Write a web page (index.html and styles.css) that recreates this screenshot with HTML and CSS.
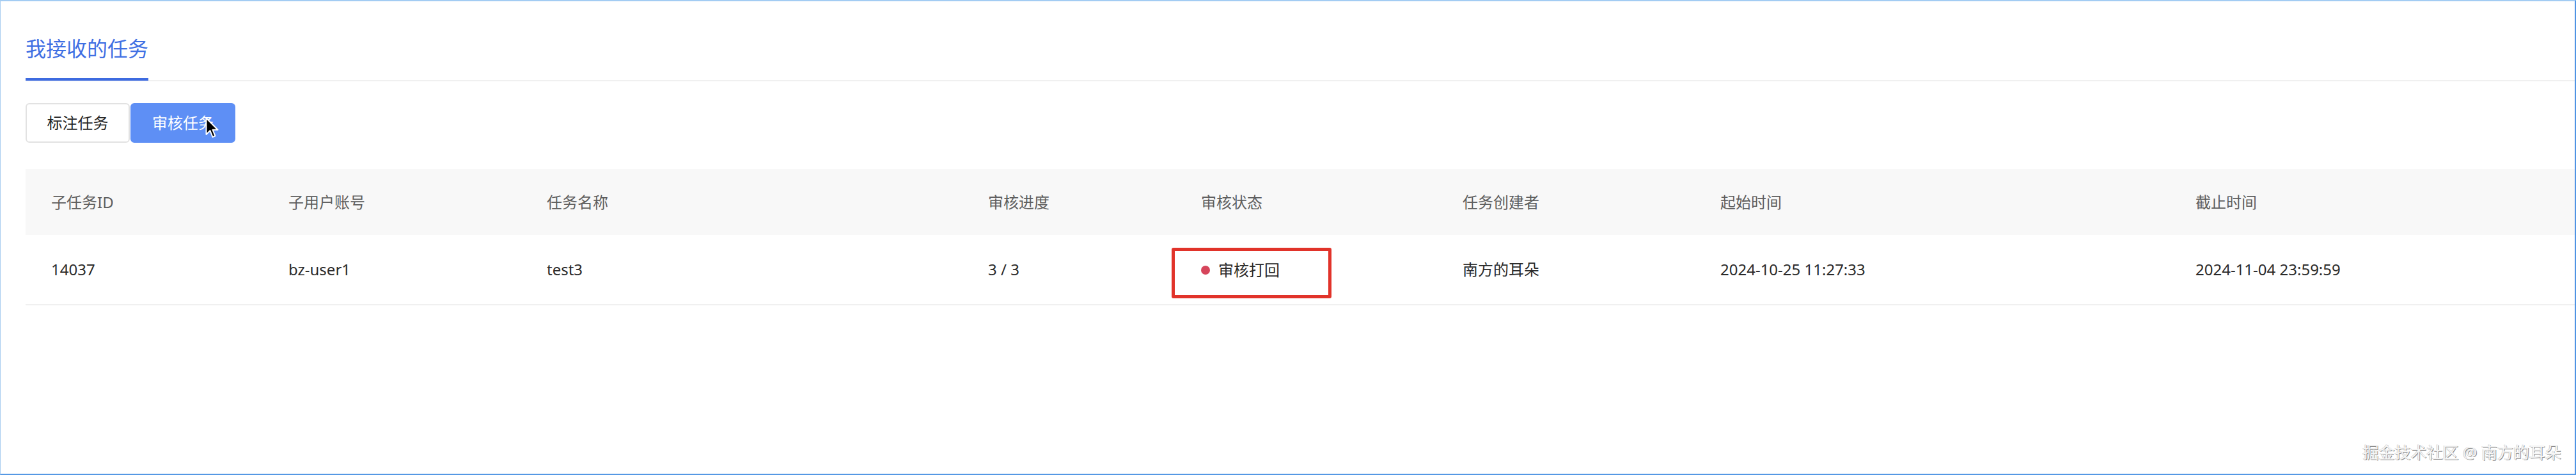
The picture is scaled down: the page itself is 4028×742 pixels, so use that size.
FILE: index.html
```html
<!DOCTYPE html>
<html lang="zh-CN">
<head>
<meta charset="utf-8">
<title>我接收的任务</title>
<link rel="stylesheet" href="styles.css">
</head>
<body>
<div class="frame">
  <div class="tabbar">
    <div class="tab active">我接收的任务</div>
  </div>
  <div class="switch">
    <button class="seg">标注任务</button>
    <button class="seg on">审核任务</button>
    <svg class="cursor" width="22" height="34" viewBox="0 0 22 34">
      <path d="M1.5 1.5 L1.5 27 L7.5 21 L11.5 31 L15.5 29.3 L11.6 19.8 L19.5 19.8 Z" fill="#000" stroke="#fff" stroke-width="2" stroke-linejoin="round"/>
    </svg>
  </div>
  <table class="grid">
    <colgroup>
      <col class="c1"><col class="c2"><col class="c3"><col class="c4"><col class="c5"><col class="c6"><col class="c7"><col class="c8">
    </colgroup>
    <thead>
      <tr>
        <th>子任务ID</th>
        <th>子用户账号</th>
        <th>任务名称</th>
        <th>审核进度</th>
        <th>审核状态</th>
        <th>任务创建者</th>
        <th>起始时间</th>
        <th>截止时间</th>
      </tr>
    </thead>
    <tbody>
      <tr>
        <td>14037</td>
        <td>bz-user1</td>
        <td>test3</td>
        <td>3 / 3</td>
        <td class="status-cell"><span class="status"><span class="dot"></span>审核打回</span><span class="mark"></span></td>
        <td>南方的耳朵</td>
        <td>2024-10-25 11:27:33</td>
        <td>2024-11-04 23:59:59</td>
      </tr>
    </tbody>
  </table>
  <div class="watermark">掘金技术社区 @ 南方的耳朵</div>
</div>
</body>
</html>
```
FILE: styles.css
```css
* { box-sizing: border-box; }
html, body { margin: 0; padding: 0; background: #fff; }
body {
  font-family: "Noto Sans", "Noto Sans CJK SC", sans-serif;
  color: #262626;
}
.frame {
  position: relative;
  width: 4028px;
  height: 742px;
  border-top: 2px solid #a3ccf3;
  border-left: 1px solid #a8cdf0;
  border-right: 2px solid #4f93e3;
  border-bottom: 2px solid #5598e4;
  padding-left: 39px;
  overflow: hidden;
}
.tabbar {
  display: flex;
  padding-top: 58px;
  border-bottom: 2px solid #f0f0f0;
}
.tab {
  font-size: 32px;
  line-height: 32px;
  padding-bottom: 30px;
  color: #3f6fe3;
  border-bottom: 4px solid #3e6be0;
  margin-bottom: -1px;
}
.switch {
  position: relative;
  display: flex;
  gap: 1px;
  margin-top: 34px;
  height: 62px;
}
.seg {
  font-family: inherit;
  font-size: 24px;
  line-height: 24px;
  height: 62px;
  width: 163px;
  padding: 0;
  border: 2px solid #e2e2e2;
  border-radius: 6px;
  background: #fff;
  color: #262626;
}
.seg.on {
  width: 164px;
  background: #5e8ff5;
  border-color: #5e8ff5;
  color: #fff;
}
.cursor {
  position: absolute;
  left: 281px;
  top: 22px;
}
.grid {
  margin-top: 41px;
  width: 3987px;
  border-collapse: collapse;
  table-layout: fixed;
  font-size: 24px;
}
.c1 { width: 371px; }
.c2 { width: 404px; }
.c3 { width: 690px; }
.c4 { width: 333px; }
.c5 { width: 409px; }
.c6 { width: 403px; }
.c7 { width: 743px; }
.c8 { width: 634px; }
.grid th {
  height: 103px;
  background: #f8f8f8;
  color: #5e5e5e;
  font-weight: 400;
  text-align: left;
  padding: 0 0 0 40px;
  line-height: 24px;
}
.grid td {
  height: 109px;
  padding: 0 0 0 40px;
  line-height: 24px;
  color: #2a2a2a;
  border-bottom: 2px solid #f0f0f0;
}
.status-cell { position: relative; }
.status { display: inline-flex; align-items: center; gap: 13px; }
.dot {
  width: 14px;
  height: 14px;
  border-radius: 50%;
  background: #d6455b;
}
.mark {
  position: absolute;
  left: -6px;
  top: 20px;
  width: 250px;
  height: 79px;
  border: 5px solid #e1332a;
  border-radius: 3px;
}
.watermark {
  position: absolute;
  right: 21px;
  bottom: 21px;
  font-size: 25px;
  line-height: 25px;
  color: #f6f6f6;
  text-shadow: 1px 1px 0 #8c8c8c, -1px 0 0 #d0d0d0;
}
```
